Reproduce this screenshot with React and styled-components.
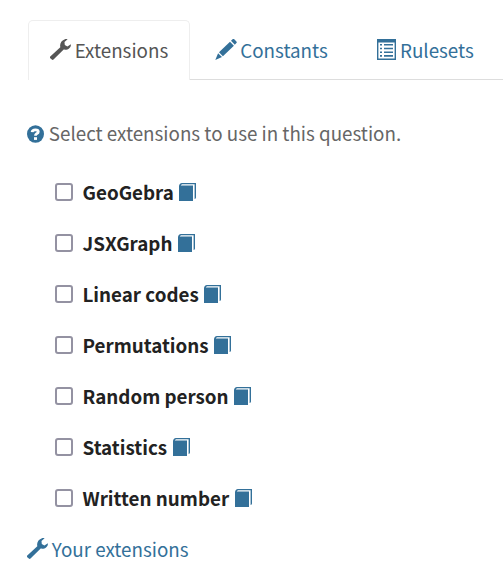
import React from "react";
import styled, { createGlobalStyle } from "styled-components";

const GlobalStyle = createGlobalStyle`
  * { box-sizing: border-box; }
  body {
    margin: 0;
    background: #fff;
    color: #222;
    font-family: "Noto Sans CJK SC", "Noto Sans", sans-serif;
    font-size: 18.8px;
    line-height: 26px;
    overflow: hidden;
  }
`;

const Page = styled.main`
  width: 503px;
  height: 567px;
  overflow: hidden;
  padding: 20px 0 0 27px;
`;

const TabBar = styled.nav`
  display: flex;
  height: 60px;
  padding-left: 1px;
`;

const Tab = styled.a`
  display: flex;
  flex: none;
  align-items: flex-start;
  width: ${(p) => p.$width}px;
  padding: 17px 0 0 ${(p) => p.$inset}px;
  gap: ${(p) => p.$gap}px;
  white-space: nowrap;
  color: ${(p) => (p.$active ? "#555" : "#337099")};
  border: 0 solid #ddd;
  border-bottom-width: 1px;
  ${(p) =>
    p.$active &&
    `
    padding-top: 16px;
    border-width: 1px 1px 0;
    border-color: #eee;
    border-radius: 5px 5px 0 0;
  `}
`;

const Hint = styled.p`
  display: flex;
  gap: 4.8px;
  margin: 40px 0 0;
  color: #666;
  white-space: nowrap;
`;

const List = styled.ul`
  list-style: none;
  margin: 33px 0 0;
  padding: 0 0 0 28px;
`;

const Row = styled.li`
  display: flex;
  height: 51px;
`;

const Option = styled.label`
  display: flex;
  font-weight: 700;
  white-space: nowrap;
`;

const Checkbox = styled.input.attrs({ type: "checkbox" })`
  appearance: none;
  width: 18px;
  height: 18px;
  margin: 4px 9.5px 0 0;
  border: 2px solid #9492a2;
  border-radius: 3px;
  background: #fff;
`;

const Link = styled.a`
  display: flex;
  gap: ${(p) => p.$gap || 0}px;
  margin-left: ${(p) => p.$indent || 0}px;
  color: #337099;
`;

const Icon = styled.svg`
  flex: none;
  width: ${(p) => p.$w}px;
  height: ${(p) => p.$h}px;
  margin-top: ${(p) => p.$top || 0}px;
  fill: currentColor;
`;

const HelpIcon = styled(Icon)`
  color: #337099;
`;

const Wrench = () => (
  <Icon $w={22} $h={22} $top={2} viewBox="0.5 0.3 22 22">
    <path d="M.5 18 10.8 8.6C10 5 11.8 1.8 15 .7 16.2.3 17.2.3 18.1.6L15 3.2l.3 3.1 2.6 1.4 3.5-2.2c.1 3.6-2.8 6-7.2 5.4L4 20.8c-.6.5-1.1.5-1.7 0L.5 19.4c-.4-.4-.4-1 0-1.4Z" />
  </Icon>
);

const Pencil = () => (
  <Icon $w={22} $h={22} $top={2} viewBox="0 0.3 22 22">
    <path d="m16 2.1 1.6-1.5c.6-.6 1.1-.5 1.7 0l2.1 2.2c.5.5.5 1.1 0 1.6L19.8 6ZM15 3.1 18.9 7 7.9 17.5 4 13.6ZM3.1 14.6 7 18.4.3 21.3Z" />
  </Icon>
);

const ListAlt = () => (
  <Icon $w={19} $h={21} $top={2} viewBox="0 0 19 21">
    <path
      fillRule="evenodd"
      d="M0 0h19v21H0ZM1.4 3.4v16.2h16.2V3.4ZM3 5h2v1.6H3Zm4 0h9v1.6H7ZM3 8.7h2v1.6H3Zm4 0h9v1.6H7Zm-4 3.7h2v1.6H3Zm4 0h9v1.6H7Zm-4 3.7h2v1.6H3Zm4 0h9v1.6H7Z"
    />
  </Icon>
);

const Question = () => (
  <HelpIcon $w={17} $h={18} $top={5} viewBox="0 0 17 18">
    <ellipse cx="8.5" cy="9" rx="8.5" ry="8.8" />
    <path
      d="M5.1 7.2C5.3 5.2 6.7 4.8 8.4 4.8c2 0 2.9.7 2.9 2 0 1.4-1 1.7-1.9 2.1-.7.4-.9.8-.9 1.9"
      fill="none"
      stroke="#fff"
      strokeWidth="2.8"
    />
    <path d="M7 12.2h3v2.7H7Z" fill="#fff" />
  </HelpIcon>
);

const Book = () => (
  <Icon $w={17} $h={18} $top={4} viewBox="0 0 17 18">
    <path d="M0 3.2C0 1.5 1.3 0 3 0H17v14.2c0 1-.5 1.6-1.4 1.8V1.2H3.6C2.7 1.2 2 1.8 1.8 2.6H14V18H0Z" />
  </Icon>
);

const extensions = [
  "GeoGebra",
  "JSXGraph",
  "Linear codes",
  "Permutations",
  "Random person",
  "Statistics",
  "Written number",
];

export default function App() {
  return (
    <>
      <GlobalStyle />
      <Page>
        <TabBar>
          <Tab $active $width={162} $inset={20.5} $gap={3.2}>
            <Wrench />
            <span>Extensions</span>
          </Tab>
          <Tab $width={162} $inset={25} $gap={3.2}>
            <Pencil />
            <span>Constants</span>
          </Tab>
          <Tab $width={180} $inset={25} $gap={4}>
            <ListAlt />
            <span>Rulesets</span>
          </Tab>
        </TabBar>
        <Hint>
          <Question />
          <span>Select extensions to use in this question.</span>
        </Hint>
        <List>
          {extensions.map((name) => (
            <Row key={name}>
              <Option>
                <Checkbox />
                {name}
              </Option>
              <Link $indent={5.5} aria-label={`${name} documentation`}>
                <Book />
              </Link>
            </Row>
          ))}
        </List>
        <Link $gap={2.8}>
          <Wrench />
          <span>Your extensions</span>
        </Link>
      </Page>
    </>
  );
}
